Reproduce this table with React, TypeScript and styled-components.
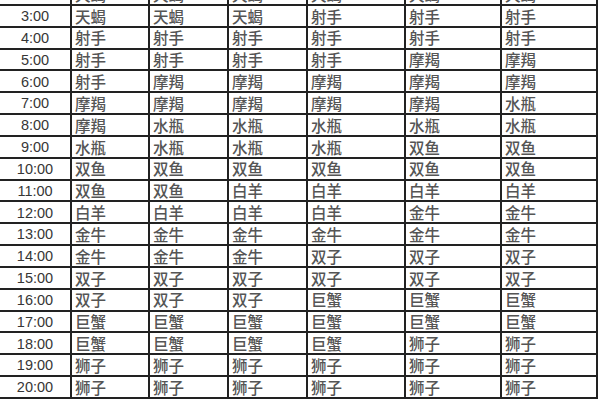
import React from "react";
import styled, { createGlobalStyle } from "styled-components";

const Global = createGlobalStyle`
  html, body {
    margin: 0;
    padding: 0;
    background: #ffffff;
    overflow: hidden;
    width: 600px;
    height: 400px;
  }
`;

const Sheet = styled.div`
  display: grid;
  width: fit-content;
  grid-template-columns: 70px 76px 77px 77px 96px 94px 94px;
  grid-auto-rows: 19.83px;
  gap: 2px;
  padding: 2px;
  margin: -17.83px 0 0 -2px;
  background: #222222;
`;

const Cell = styled.div<{ $time?: boolean }>`
  background: #ffffff;
  display: flex;
  align-items: center;
  justify-content: ${(p) => (p.$time ? "center" : "flex-start")};
  padding: ${(p) => (p.$time ? "1px 0 0 0" : "1px 0 0 3px")};
  font-family: ${(p) =>
    p.$time
      ? `"Liberation Sans", Arial, sans-serif`
      : `"Noto Sans CJK SC", "Noto Sans", sans-serif`};
  font-size: ${(p) => (p.$time ? "14.5px" : "15.5px")};
  font-weight: ${(p) => (p.$time ? 400 : 500)};
  color: ${(p) => (p.$time ? "#363636" : "#555555")};
  line-height: 1;
  white-space: nowrap;
  overflow: hidden;
`;

const rows: [string, string[]][] = [
  ["2:00", ["天蝎", "天蝎", "天蝎", "天蝎", "天蝎", "天蝎"]],
  ["3:00", ["天蝎", "天蝎", "天蝎", "射手", "射手", "射手"]],
  ["4:00", ["射手", "射手", "射手", "射手", "射手", "射手"]],
  ["5:00", ["射手", "射手", "射手", "射手", "摩羯", "摩羯"]],
  ["6:00", ["射手", "摩羯", "摩羯", "摩羯", "摩羯", "摩羯"]],
  ["7:00", ["摩羯", "摩羯", "摩羯", "摩羯", "摩羯", "水瓶"]],
  ["8:00", ["摩羯", "水瓶", "水瓶", "水瓶", "水瓶", "水瓶"]],
  ["9:00", ["水瓶", "水瓶", "水瓶", "水瓶", "双鱼", "双鱼"]],
  ["10:00", ["双鱼", "双鱼", "双鱼", "双鱼", "双鱼", "双鱼"]],
  ["11:00", ["双鱼", "双鱼", "白羊", "白羊", "白羊", "白羊"]],
  ["12:00", ["白羊", "白羊", "白羊", "白羊", "金牛", "金牛"]],
  ["13:00", ["金牛", "金牛", "金牛", "金牛", "金牛", "金牛"]],
  ["14:00", ["金牛", "金牛", "金牛", "双子", "双子", "双子"]],
  ["15:00", ["双子", "双子", "双子", "双子", "双子", "双子"]],
  ["16:00", ["双子", "双子", "双子", "巨蟹", "巨蟹", "巨蟹"]],
  ["17:00", ["巨蟹", "巨蟹", "巨蟹", "巨蟹", "巨蟹", "巨蟹"]],
  ["18:00", ["巨蟹", "巨蟹", "巨蟹", "巨蟹", "狮子", "狮子"]],
  ["19:00", ["狮子", "狮子", "狮子", "狮子", "狮子", "狮子"]],
  ["20:00", ["狮子", "狮子", "狮子", "狮子", "狮子", "狮子"]],
];

export default function App() {
  return (
    <>
      <Global />
      <Sheet>
        {rows.map(([time, signs]) => (
          <React.Fragment key={time}>
            <Cell $time>{time}</Cell>
            {signs.map((s, i) => (
              <Cell key={i}>{s}</Cell>
            ))}
          </React.Fragment>
        ))}
      </Sheet>
    </>
  );
}
